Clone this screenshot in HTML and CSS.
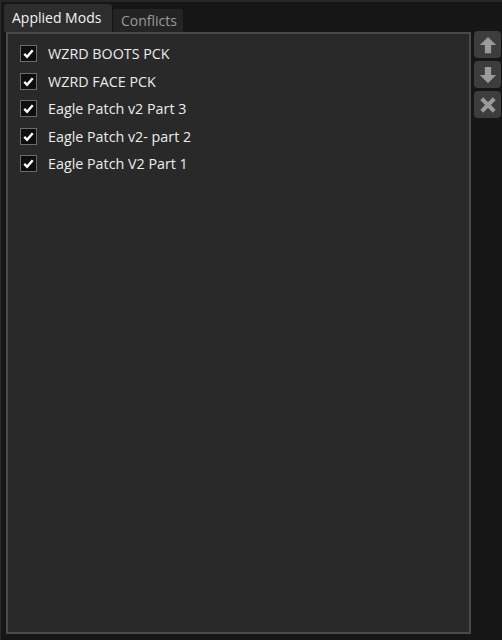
FILE: index.html
```html
<!DOCTYPE html>
<html lang="en">
<head>
    <meta charset="UTF-8">
    <title>Applied Mods</title>
    <link rel="stylesheet" href="styles.css">
</head>
<body>
    <div class="app">
        <div class="main">
            <div class="tabs">
                <div class="tab active">Applied Mods</div>
                <div class="tab">Conflicts</div>
            </div>
            <div class="panel">
                <ul class="mods">
                    <li><span class="check"><svg viewBox="0 0 16 16"><path d="M3.5 8.5l3 3 6-7" /></svg></span>WZRD BOOTS PCK</li>
                    <li><span class="check"><svg viewBox="0 0 16 16"><path d="M3.5 8.5l3 3 6-7" /></svg></span>WZRD FACE PCK</li>
                    <li><span class="check"><svg viewBox="0 0 16 16"><path d="M3.5 8.5l3 3 6-7" /></svg></span>Eagle Patch v2 Part 3</li>
                    <li><span class="check"><svg viewBox="0 0 16 16"><path d="M3.5 8.5l3 3 6-7" /></svg></span>Eagle Patch v2- part 2</li>
                    <li><span class="check"><svg viewBox="0 0 16 16"><path d="M3.5 8.5l3 3 6-7" /></svg></span>Eagle Patch V2 Part 1</li>
                </ul>
            </div>
        </div>
        <div class="side">
            <button class="tool" title="Move up">
                <svg viewBox="0 0 16 16"><path d="M8 1.5l6.5 6.5h-4v6.5h-5V8h-4z" /></svg>
            </button>
            <button class="tool" title="Move down">
                <svg viewBox="0 0 16 16"><path d="M8 14.5l6.5-6.5h-4V1.5h-5V8h-4z" /></svg>
            </button>
            <button class="tool" title="Remove">
                <svg viewBox="0 0 16 16"><path class="x" d="M3 3l10 10M13 3L3 13" /></svg>
            </button>
        </div>
    </div>
</body>
</html>
```

FILE: styles.css
```css
body {
    margin: 0;
    background-color: #161616;
    font-family: "Open Sans", "Noto Sans", sans-serif;
    font-size: 14px;
}
.app {
    display: flex;
    height: 640px;
    box-sizing: border-box;
    border-top: 2px solid #262626;
    border-left: 1px solid #2a2a2a;
    padding: 2px 0 0 3px;
}
.main {
    width: 467px;
    display: flex;
    flex-direction: column;
}
.tabs {
    display: flex;
    align-items: flex-end;
    height: 28px;
}
.tab {
    background-color: #242424;
    color: #9a9a9a;
    height: 23px;
    line-height: 23px;
    padding: 0 6px 0 8px;
    border-radius: 3px 3px 0 0;
    margin-left: 1px;
}
.tab.active {
    background-color: #2d2d2d;
    color: #f2f2f2;
    height: 28px;
    line-height: 27px;
    padding: 0 7px 0 8px;
    margin-left: 0;
    width: 93px;
}
.panel {
    margin: 0 0 6px 2px;
    height: 602px;
    box-sizing: border-box;
    background-color: #292929;
    border: 2px solid #4a4a4a;
}
.mods {
    list-style: none;
    margin: 0;
    padding: 6px 0 0 12px;
}
.mods li {
    display: flex;
    align-items: center;
    height: 27.5px;
    color: #ececec;
    font-size: 14.3px;
}
.check {
    width: 15px;
    height: 15px;
    margin-right: 11px;
    border: 1px solid #6c6c6c;
    background-color: #0e0e0e;
    display: flex;
}
.check svg {
    width: 15px;
    height: 15px;
    fill: none;
    stroke: #ffffff;
    stroke-width: 2.6;
}
.side {
    display: flex;
    flex-direction: column;
    gap: 3px;
    padding: 27px 0 0 3px;
}
.tool {
    box-sizing: border-box;
    width: 27px;
    height: 27px;
    padding: 0;
    border: 0;
    border-radius: 4px;
    background-color: #3d3d3d;
    display: flex;
    align-items: center;
    justify-content: center;
}
.tool svg {
    width: 20px;
    height: 20px;
    fill: #9b9b9b;
}
.tool .x {
    fill: none;
    stroke: #9b9b9b;
    stroke-width: 3.2;
}
```
